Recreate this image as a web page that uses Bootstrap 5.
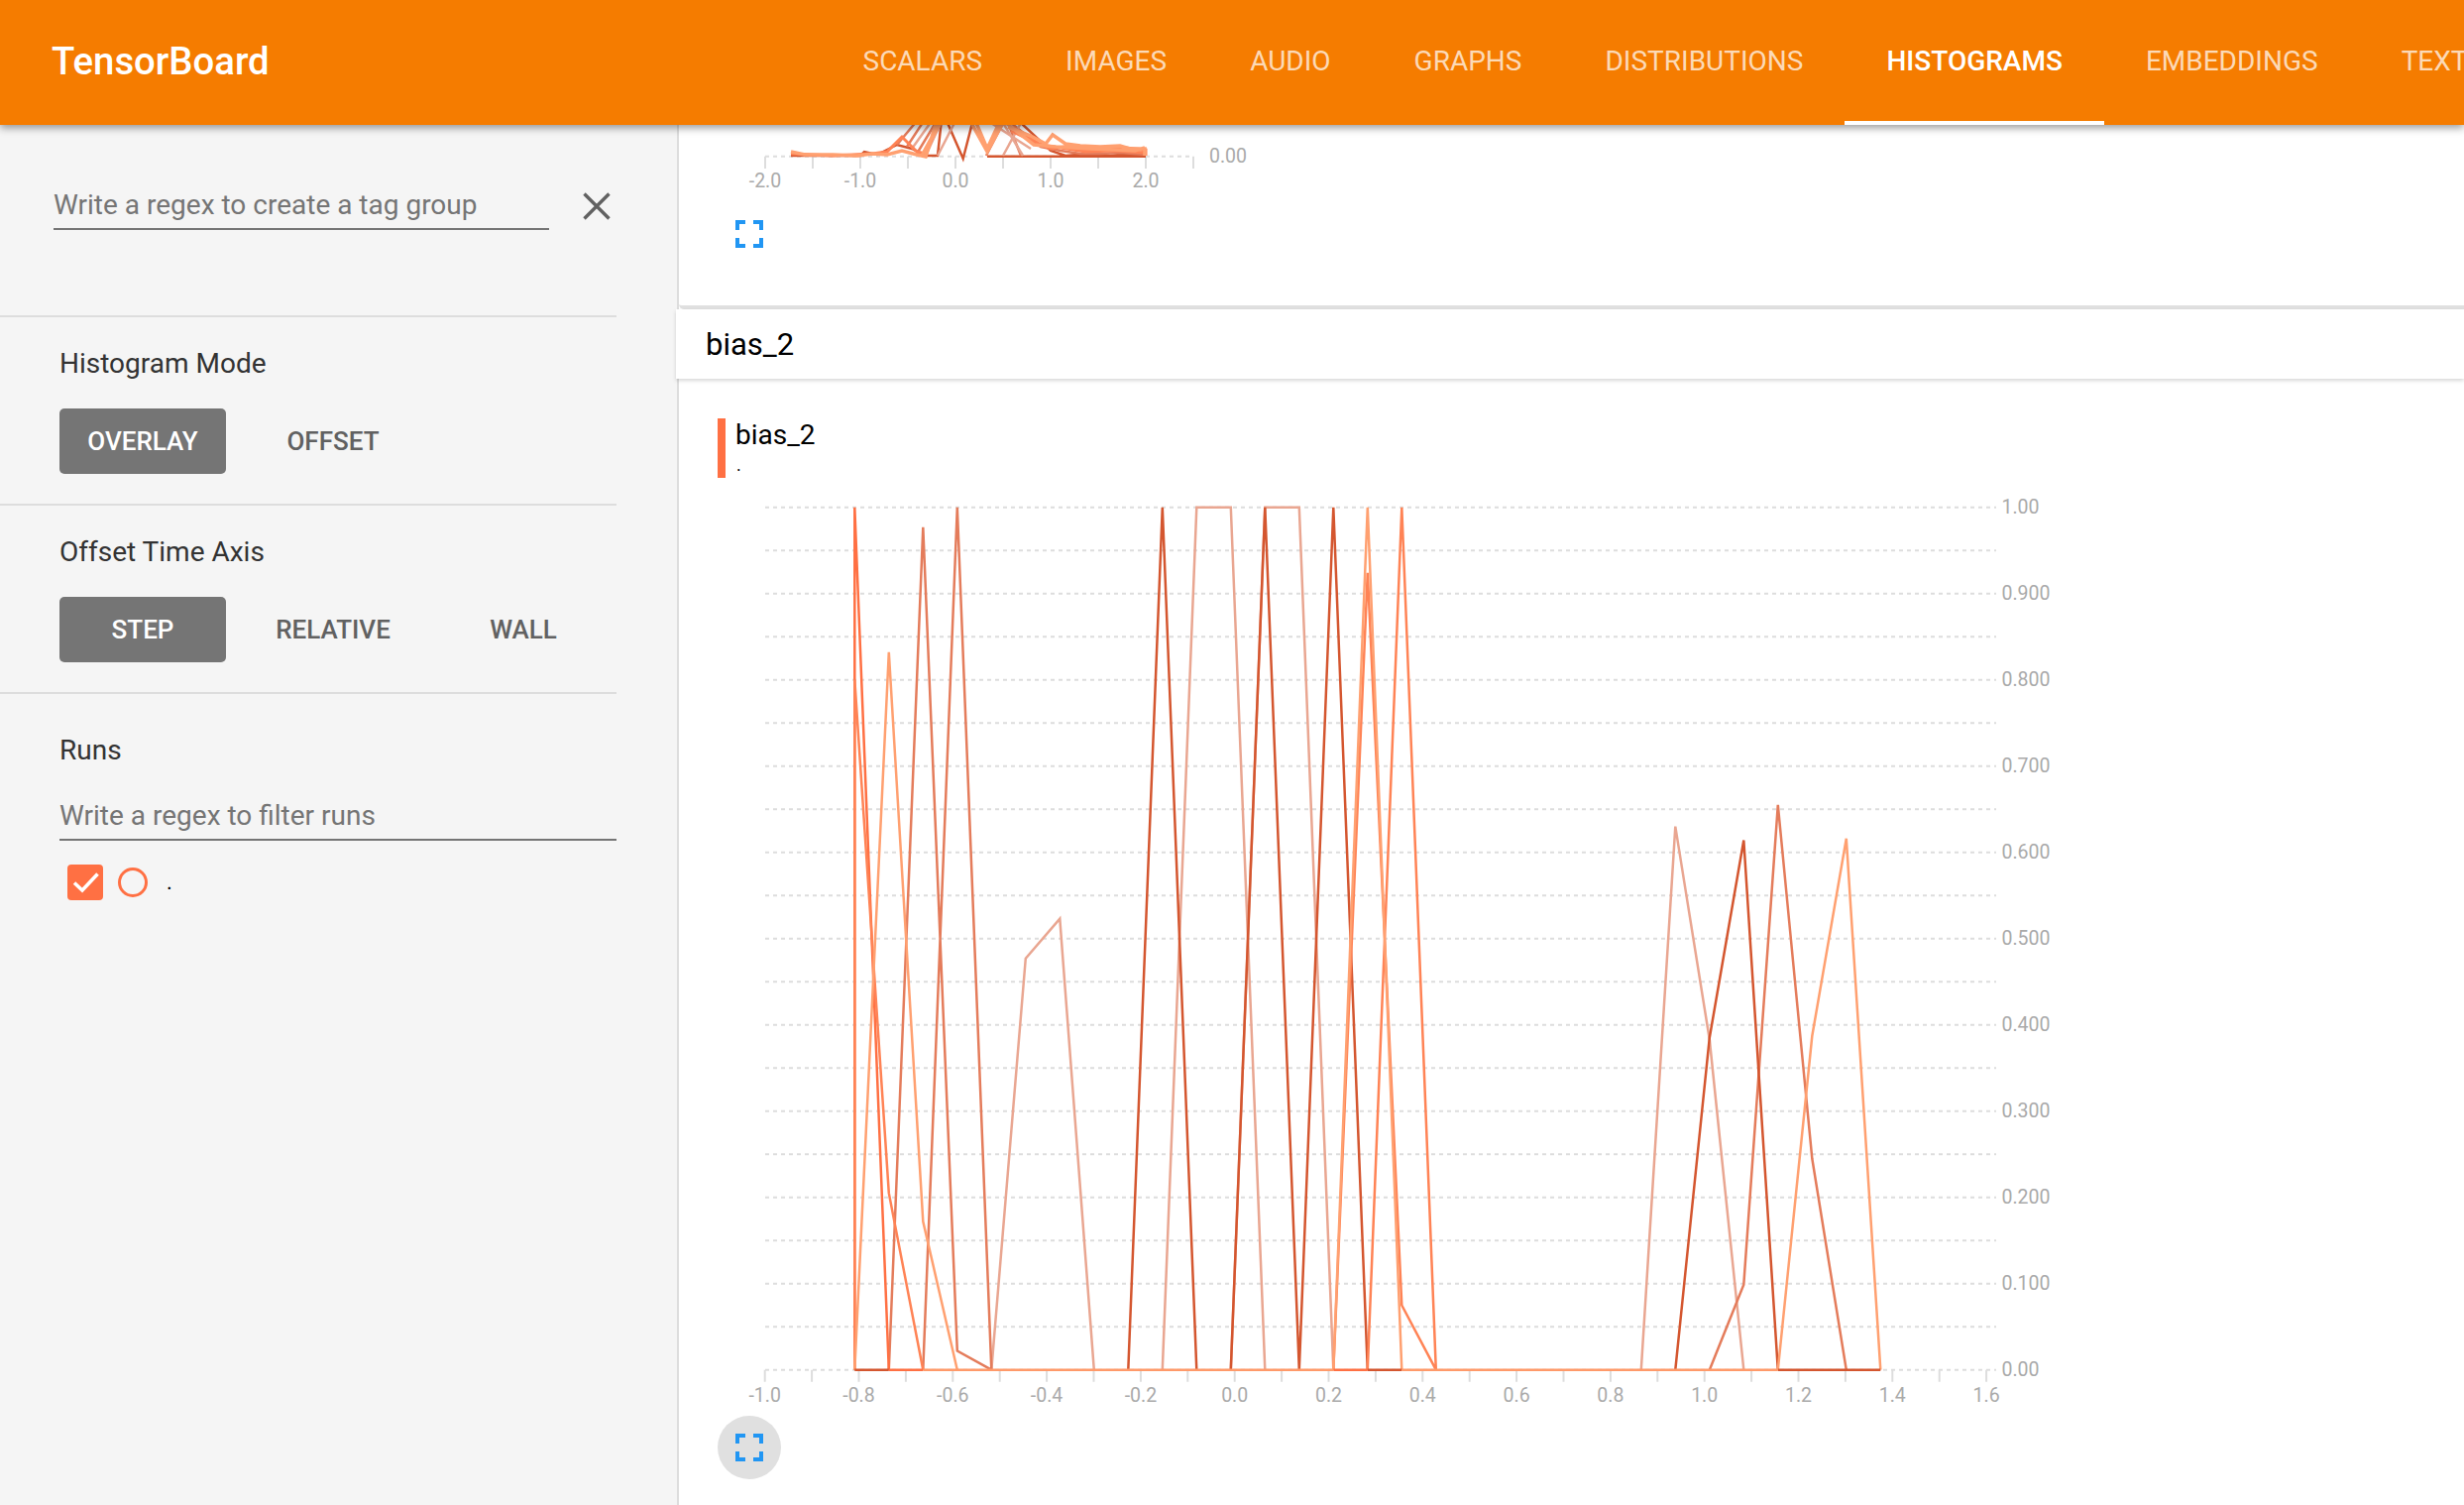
<!doctype html>
<html lang="en">
<head>
<meta charset="utf-8">
<title>TensorBoard</title>
<link href="https://cdn.jsdelivr.net/npm/bootstrap@5.3.0/dist/css/bootstrap.min.css" rel="stylesheet">
<style>
html,body{height:100%;overflow:hidden;background:#fff;font-family:Roboto,"Liberation Sans",sans-serif}
.tb-head{height:126px;background:#f57c00;position:relative;z-index:5;box-shadow:0 3px 8px rgba(0,0,0,.4);padding:0}
.tb-head.navbar{flex-wrap:nowrap;justify-content:flex-start;align-items:stretch}
.tb-brand{font-size:38.3px;font-weight:500;color:#fff;margin-left:52px;width:218px;line-height:124px;flex:none}
.tb-tabs{flex-wrap:nowrap;margin-left:558.5px;flex:none}
.tb-tabs .nav-link{height:126px;line-height:124px;padding:0 42px;font-size:28px;font-weight:400;color:rgba(255,255,255,.72);white-space:nowrap;border-bottom:4px solid transparent}
.tb-tabs .nav-link.active{color:#fff;font-weight:500;border-bottom-color:#fff}
.tb-body{height:calc(100vh - 126px)}
.tb-side{width:685px;flex:none;background:#f5f5f5;border-right:2px solid #ddd;overflow:hidden}
.tb-search{width:622px;height:194px;padding:58px 0 0 54px;border-bottom:2px solid #ddd}
.tb-field{display:block;height:48px;line-height:46px;font-size:28px;color:#757575;border-bottom:2px solid #757575;margin:0}
.tb-search .tb-field{width:500px}
.tb-close{margin:10px 0 0 34px;flex:none}
.tb-sect{width:622px;padding:26px 0 30px 60px;border-bottom:2px solid #ddd}
.tb-sect-title{font-size:28px;line-height:42px;color:#333;height:40px;margin-bottom:26px}
.tb-btn{width:168px;height:66px;padding:0;font-size:26px;font-weight:500;color:#616161;border:0;border-radius:5px;background:transparent}
.tb-btn.active,.tb-btn.active:hover{background:#757575;color:#fff}
.tb-runs{width:622px;padding:37px 0 0 60px}
.tb-runs .tb-sect-title{margin-bottom:23px;line-height:40px}
.tb-check{width:36px;height:36px;background:#ff7043;border-radius:4px;flex:none}
.tb-ring{width:30px;height:30px;border:3px solid #ff7043;border-radius:50%;flex:none;margin-left:15px}
.tb-dot{font-size:22px;color:#000;margin-left:19px;line-height:36px}
.tb-run{margin:24px 0 0 8px}
.tb-main{min-width:0}
.tb-card-top{height:186px;border-bottom:4px solid #e0e0e0;border-bottom-left-radius:5px;padding-left:15px}
.tb-card-top svg,.tb-chart-box svg{display:block;overflow:hidden}
.tb-cat{height:70px;line-height:71px;margin-left:-3px;padding-left:30px;font-size:31px;color:#000;background:#fff;position:relative;box-shadow:0 2px 4px rgba(0,0,0,.16)}
.tb-chart-box{padding:40px 0 0 15px}
.tb-tag{margin-left:24px;height:60px;margin-bottom:18px;border-left:8px solid #ff7043;padding-left:10px;color:#000}
.tb-tag-name{font-size:28px;line-height:34px;height:34px}
.tb-tag-run{font-size:18px;line-height:26px;padding-left:1px}
.tb-fs{width:64px;height:64px;padding:0;border:0;border-radius:50%;margin:8px 0 0 24px;background:transparent;display:flex;align-items:center;justify-content:center}
.tb-fs.tb-hover{background:#e0e0e0}
.tb-ax{font-family:Roboto,"Liberation Sans",sans-serif;font-size:19.5px;fill:#aaa}
.tb-mid{text-anchor:middle}
.tb-grid{fill:none;stroke:#ddd;stroke-width:2;stroke-dasharray:4 4}
.tb-tick{fill:none;stroke:#ddd;stroke-width:2}
.tb-ln{fill:none;stroke-width:2.5;stroke-linejoin:miter}
</style>
</head>
<body class="m-0">
<nav class="navbar tb-head">
  <div class="tb-brand">TensorBoard</div>
  <ul class="nav tb-tabs">
    <li class="nav-item"><a class="nav-link" href="#">SCALARS</a></li>
    <li class="nav-item"><a class="nav-link" href="#">IMAGES</a></li>
    <li class="nav-item"><a class="nav-link" href="#">AUDIO</a></li>
    <li class="nav-item"><a class="nav-link" href="#">GRAPHS</a></li>
    <li class="nav-item"><a class="nav-link" href="#">DISTRIBUTIONS</a></li>
    <li class="nav-item"><a class="nav-link active" href="#">HISTOGRAMS</a></li>
    <li class="nav-item"><a class="nav-link" href="#">EMBEDDINGS</a></li>
    <li class="nav-item"><a class="nav-link" href="#">TEXT</a></li>
  </ul>
</nav>
<div class="d-flex tb-body">
  <aside class="tb-side">
    <div class="d-flex tb-search">
      <label class="tb-field">Write a regex to create a tag group</label>
      <svg class="tb-close" width="28" height="28" viewBox="0 0 28 28"><path d="M1.5 1.5L26.5 26.5M26.5 1.5L1.5 26.5" stroke="#616161" stroke-width="3.4" fill="none"/></svg>
    </div>
    <div class="tb-sect">
      <div class="tb-sect-title">Histogram Mode</div>
      <div class="d-flex gap-4">
        <button class="btn tb-btn active" type="button">OVERLAY</button>
        <button class="btn tb-btn" type="button">OFFSET</button>
      </div>
    </div>
    <div class="tb-sect">
      <div class="tb-sect-title">Offset Time Axis</div>
      <div class="d-flex gap-4">
        <button class="btn tb-btn active" type="button">STEP</button>
        <button class="btn tb-btn" type="button">RELATIVE</button>
        <button class="btn tb-btn" type="button">WALL</button>
      </div>
    </div>
    <div class="tb-runs">
      <div class="tb-sect-title">Runs</div>
      <label class="tb-field">Write a regex to filter runs</label>
      <div class="d-flex align-items-center tb-run">
        <div class="tb-check d-flex align-items-center justify-content-center">
          <svg width="28" height="28" viewBox="0 0 28 28"><path d="M3 14.5L11 22L26.5 5.5" stroke="#fff" stroke-width="3.6" fill="none"/></svg>
        </div>
        <div class="tb-ring"></div>
        <div class="tb-dot">.</div>
      </div>
    </div>
  </aside>
  <main class="flex-grow-1 tb-main">
    <div class="tb-card-top">
      <svg width="600" height="70" viewBox="700 126 600 70">
        <path class="tb-grid" d="M772 157.7H1204"/>
        <path class="tb-tick" d="M772 157.7V170M820 157.7V170M868 157.7V170M916 157.7V170M964 157.7V170M1012 157.7V170M1060 157.7V170M1108 157.7V170M1156 157.7V170M1204 157.7V170"/>
        <g class="tb-ln">
          <path stroke="#d4562f" d="M798 157L830 157L868 157L872 153L885 156L905 146L920 150L934 157L946 157L950 120M956 124L971.7 160L981 124M996 157.7H1156M1030 124L1060 152L1075 157L1100 155L1120 157L1140 155L1156 157"/>
          <path stroke="#e47c5b" d="M905 146L925 122M915 148L932 122M925 155L945 122M1010 124L1020 124L1050 148L1070 152L1090 155L1110 155L1130 154L1156 156M1017 124L1030 157M995 157L1012 124M962 124L985 124"/>
          <path stroke="#e9a691" d="M920 150L940 122M934 157L950 122M946 157L964 122M1012 124L1032 157M1012 157L1030 124M1000 124L1040 150"/>
          <path stroke="#ff8355" stroke-width="3" d="M798 155L840 157L880 155L895 153L910 138L925 153L934 155L948 122M1020 132L1045 144L1060 150L1080 147L1100 152L1120 149L1135 149L1156 151V157M1022 128L1050 146L1070 149L1095 153L1125 152L1156 154"/>
          <path stroke="#ffa070" stroke-width="3.5" d="M798 153L812 156L840 156L865 157L880 155L895 156L910 152L925 156L934 158L945 122L952 122M930 157L948 124M980 124L996 153L1012 124M985 124L996 150L1008 124M1017 128L1040 137L1055 145L1062 136L1075 145L1090 147L1110 148L1130 147L1140 150L1155 150V157M1015 124L1043 146L1065 148L1100 150L1125 151L1145 152L1155 149M940 140L950 122"/>
        </g>
        <g class="tb-ax">
          <text class="tb-mid" x="772" y="188.5">-2.0</text><text class="tb-mid" x="868" y="188.5">-1.0</text><text class="tb-mid" x="964" y="188.5">0.0</text><text class="tb-mid" x="1060" y="188.5">1.0</text><text class="tb-mid" x="1156" y="188.5">2.0</text>
          <text x="1220" y="164">0.00</text>
        </g>
      </svg>
      <button class="btn tb-fs" type="button" aria-label="Fullscreen">
        <svg width="48" height="48" viewBox="0 0 24 24"><path fill="#2196f3" d="M7 14H5v5h5v-2H7v-3zm-2-4h2V7h3V5H5v5zm12 7h-3v2h5v-5h-2v3zM14 5v2h3v3h2V5h-5z"/></svg>
      </button>
    </div>
    <div class="tb-cat">bias_2</div>
    <div class="tb-chart-box">
      <div class="tb-tag">
        <div class="tb-tag-name">bias_2</div>
        <div class="tb-tag-run">.</div>
      </div>
      <svg width="1400" height="920" viewBox="700 500 1400 920">
        <path class="tb-grid" d="M772 511.7H2014M772 555.2H2014M772 598.7H2014M772 642.2H2014M772 685.7H2014M772 729.2H2014M772 772.7H2014M772 816.2H2014M772 859.7H2014M772 903.2H2014M772 946.7H2014M772 990.2H2014M772 1033.7H2014M772 1077.2H2014M772 1120.7H2014M772 1164.2H2014M772 1207.7H2014M772 1251.2H2014M772 1294.7H2014M772 1338.2H2014M772 1381.7H2014"/>
        <path class="tb-tick" d="M771.7 1381.7v12M819.1 1381.7v12M866.5 1381.7v12M913.9 1381.7v12M961.3 1381.7v12M1008.7 1381.7v12M1056.1 1381.7v12M1103.5 1381.7v12M1150.9 1381.7v12M1198.3 1381.7v12M1245.7 1381.7v12M1293.1 1381.7v12M1340.5 1381.7v12M1387.9 1381.7v12M1435.3 1381.7v12M1482.7 1381.7v12M1530.1 1381.7v12M1577.5 1381.7v12M1624.9 1381.7v12M1672.3 1381.7v12M1719.7 1381.7v12M1767.1 1381.7v12M1814.5 1381.7v12M1861.9 1381.7v12M1909.3 1381.7v12M1956.7 1381.7v12M2004.1 1381.7v12"/>
        <g class="tb-ln">
          <path stroke="#e9a691" d="M1000.3 1381.7L1034.8 966.7L1069.3 926.7L1103.8 1381.7M1172.8 1381.7L1207.3 511.7L1241.8 511.7L1276.3 1381.7M1241.8 1381.7L1276.3 511.7L1310.8 511.7L1345.3 1381.7M1655.8 1381.7L1690.3 833.6L1724.8 1048.5L1759.3 1381.7"/>
          <path stroke="#e47c5b" d="M896.8 1381.7L931.3 531.7L965.8 1362.5L1000.3 1381.7M931.3 1381.7L965.8 511.7L1000.3 1381.7M1724.8 1381.7L1759.3 1295.6L1793.8 811.9L1828.3 1168.5L1862.8 1381.7"/>
          <path stroke="#d4562f" d="M1138.3 1381.7L1172.8 511.7L1207.3 1381.7M1241.8 1381.7L1276.3 511.7L1310.8 1381.7L1345.3 511.7L1379.8 1381.7M1690.3 1381.7L1724.8 1046.7L1759.3 847.5L1793.8 1381.7"/>
          <path stroke="#ff7043" d="M862.3 1381.7V511.7L896.8 1381.7"/>
          <path stroke="#ff8355" d="M862.3 1381.7V685.7L896.8 1203.4L931.3 1381.7M1345.3 1381.7L1379.8 577.8L1414.3 1316.5L1448.8 1381.7M1379.8 1381.7L1414.3 511.7L1448.8 1381.7"/>
          <path stroke="#ffa070" d="M862.3 1381.7L896.8 657.9L931.3 1232L965.8 1381.7M1345.3 1381.7L1379.8 511.7L1414.3 1381.7M1793.8 1381.7L1828.3 1045L1862.8 845.8L1897.3 1381.7"/>
          <path stroke="#d4562f" d="M862.3 1381.7H896.8M1379.8 1381.7H1414.3M1793.8 1381.7H1897.3"/>
          <path stroke="#ff7043" d="M896.8 1381.7H931.3M1345.3 1381.7H1379.8"/>
          <path stroke="#ff9a6a" d="M931.3 1381.7H1345.3M1414.3 1381.7H1793.8"/>
        </g>
        <g class="tb-ax">
          <text class="tb-mid" x="771.7" y="1414">-1.0</text><text class="tb-mid" x="866.5" y="1414">-0.8</text><text class="tb-mid" x="961.3" y="1414">-0.6</text><text class="tb-mid" x="1056.1" y="1414">-0.4</text><text class="tb-mid" x="1150.9" y="1414">-0.2</text><text class="tb-mid" x="1245.7" y="1414">0.0</text><text class="tb-mid" x="1340.5" y="1414">0.2</text><text class="tb-mid" x="1435.3" y="1414">0.4</text><text class="tb-mid" x="1530.1" y="1414">0.6</text><text class="tb-mid" x="1624.9" y="1414">0.8</text><text class="tb-mid" x="1719.7" y="1414">1.0</text><text class="tb-mid" x="1814.5" y="1414">1.2</text><text class="tb-mid" x="1909.3" y="1414">1.4</text><text class="tb-mid" x="2004.1" y="1414">1.6</text>
          <text x="2019.5" y="517.5">1.00</text><text x="2019.5" y="604.5">0.900</text><text x="2019.5" y="691.5">0.800</text><text x="2019.5" y="778.5">0.700</text><text x="2019.5" y="865.5">0.600</text><text x="2019.5" y="952.5">0.500</text><text x="2019.5" y="1039.5">0.400</text><text x="2019.5" y="1126.5">0.300</text><text x="2019.5" y="1213.5">0.200</text><text x="2019.5" y="1300.5">0.100</text><text x="2019.5" y="1387.5">0.00</text>
        </g>
      </svg>
      <button class="btn tb-fs tb-hover" type="button" aria-label="Fullscreen">
        <svg width="48" height="48" viewBox="0 0 24 24"><path fill="#2196f3" d="M7 14H5v5h5v-2H7v-3zm-2-4h2V7h3V5H5v5zm12 7h-3v2h5v-5h-2v3zM14 5v2h3v3h2V5h-5z"/></svg>
      </button>
    </div>
  </main>
</div>
<script src="https://cdn.jsdelivr.net/npm/bootstrap@5.3.0/dist/js/bootstrap.bundle.min.js"></script>
</body>
</html>
